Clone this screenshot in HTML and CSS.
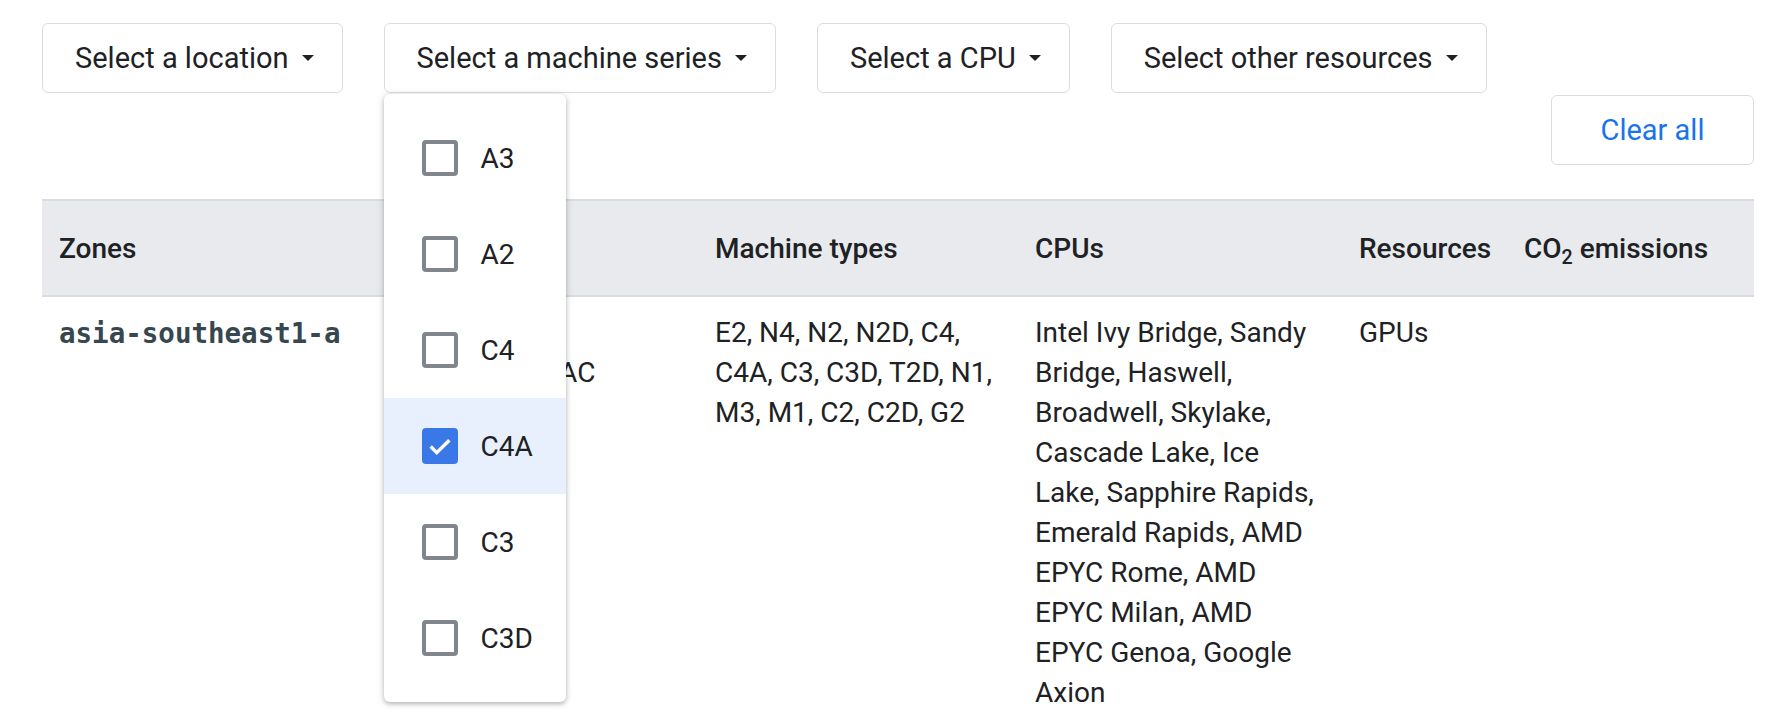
FILE: index.html
```html
<!DOCTYPE html>
<html>
<head>
<meta charset="utf-8">
<link rel="stylesheet" href="styles.css">
</head>
<body>
<div class="page">
  <div class="filters">
    <button class="filter">Select a location<span class="caret"></span></button>
    <div class="menu-wrap">
      <button class="filter">Select a machine series<span class="caret"></span></button>
      <div class="dropdown">
        <div class="item"><span class="box"></span><span class="label">A3</span></div>
        <div class="item"><span class="box"></span><span class="label">A2</span></div>
        <div class="item"><span class="box"></span><span class="label">C4</span></div>
        <div class="item selected"><span class="box checked"><svg viewBox="0 0 24 24" width="32" height="32"><path d="M4 12.5l5.2 5.2L20 7" fill="none" stroke="#fff" stroke-width="3"/></svg></span><span class="label">C4A</span></div>
        <div class="item"><span class="box"></span><span class="label">C3</span></div>
        <div class="item"><span class="box"></span><span class="label">C3D</span></div>
      </div>
    </div>
    <button class="filter">Select a CPU<span class="caret"></span></button>
    <button class="filter">Select other resources<span class="caret"></span></button>
  </div>
  <div class="clear-row">
    <button class="clear">Clear all</button>
  </div>
  <table class="zones">
    <colgroup>
      <col class="c1"><col class="c2"><col class="c3"><col class="c4"><col class="c5"><col class="c6">
    </colgroup>
    <thead>
      <tr>
        <th>Zones</th>
        <th>Location</th>
        <th>Machine types</th>
        <th>CPUs</th>
        <th>Resources</th>
        <th>CO<sub>2</sub> emissions</th>
      </tr>
    </thead>
    <tbody>
      <tr>
        <td><code class="zone">asia-southeast1-a</code></td>
        <td class="loc">Jurong West, Singapore, APAC</td>
        <td>E2, N4, N2, N2D, C4, C4A, C3, C3D, T2D, N1, M3, M1, C2, C2D, G2</td>
        <td class="cpus">Intel Ivy Bridge, Sandy Bridge, Haswell, Broadwell, Skylake, Cascade Lake, Ice Lake, Sapphire Rapids, Emerald Rapids, AMD EPYC Rome, AMD EPYC Milan, AMD EPYC Genoa, Google Axion</td>
        <td>GPUs</td>
        <td></td>
      </tr>
    </tbody>
  </table>
</div>
</body>
</html>
```
FILE: styles.css
```css
* { box-sizing: border-box; }
html, body { margin: 0; padding: 0; background: #fff; }
body {
  font-family: Roboto, "Noto Sans", sans-serif;
  color: #202124;
  font-size: 28px;
  overflow: hidden;
  height: 718px;
}
.page {
  padding: 23px 28px 0 42px;
}
.filters {
  display: flex;
  gap: 41px;
  align-items: flex-start;
}
.filter {
  font-family: inherit;
  font-size: 29px;
  color: #202124;
  background: #fff;
  border: 1px solid #dadce0;
  border-radius: 6px;
  height: 70px;
  padding: 0 28px 0 32px;
  display: flex;
  align-items: center;
  gap: 13px;
  cursor: pointer;
}
.caret {
  width: 0;
  height: 0;
  border-left: 6px solid transparent;
  border-right: 6px solid transparent;
  border-top: 6px solid #202124;
}
.menu-wrap { position: relative; }
.dropdown {
  position: absolute;
  top: 71px;
  left: 0;
  width: 182px;
  background: #fff;
  border-radius: 6px;
  box-shadow: 0 2px 4px rgba(60,64,67,.3), 0 1px 8px rgba(60,64,67,.15);
  padding: 16px 0;
  z-index: 5;
}
.item {
  height: 96px;
  display: flex;
  align-items: center;
  padding-left: 38px;
  gap: 23px;
  font-size: 28px;
}
.item.selected { background: #e8f0fe; }
.box {
  width: 36px;
  height: 36px;
  border: 4px solid #80868b;
  border-radius: 4px;
  display: flex;
  align-items: center;
  justify-content: center;
  flex: none;
}
.box.checked { background: #3b78e7; border-color: #3b78e7; }
.clear-row {
  display: flex;
  justify-content: flex-end;
  margin-top: 2px;
}
.clear {
  font-family: inherit;
  font-size: 29px;
  color: #1a73e8;
  background: #fff;
  border: 1px solid #dadce0;
  border-radius: 6px;
  width: 203px;
  height: 70px;
}
.zones {
  margin-top: 34px;
  width: 100%;
  border-collapse: collapse;
  table-layout: fixed;
}
.c1 { width: 328px; }
.c2 { width: 328px; }
.c3 { width: 320px; }
.c4 { width: 324px; }
.c5 { width: 165px; }
.c6 { width: auto; }
.zones th {
  background: #e8eaed;
  border-top: 2px solid #dadce0;
  border-bottom: 2px solid #dadce0;
  height: 96px;
  text-align: left;
  font-weight: 500;
  padding: 0 17px;
  white-space: nowrap;
}
.zones sub { font-size: 0.7em; vertical-align: -6px; line-height: 0; }
.zones td {
  vertical-align: top;
  padding: 16px 17px;
  line-height: 40px;
}
.zones td.loc { padding-right: 70px; }
.zones td.cpus { padding-right: 20px; }
.zone {
  font-family: "DejaVu Sans Mono", "Liberation Mono", monospace;
  font-size: 27.5px;
  font-weight: bold;
  color: #37474f;
}
```
